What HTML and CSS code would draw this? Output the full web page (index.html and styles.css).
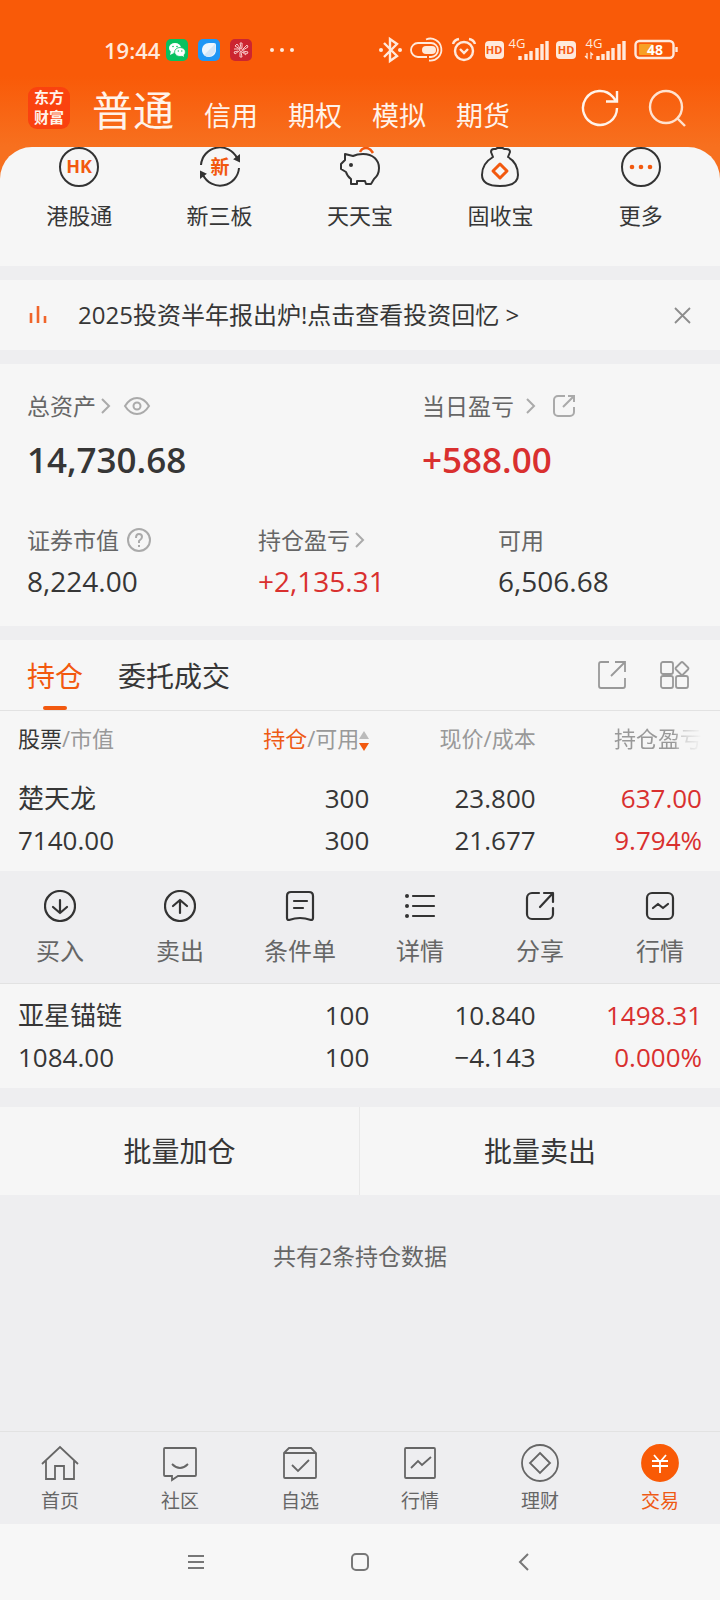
FILE: index.html
```
<!DOCTYPE html>
<html lang="zh-CN">
<head>
    <meta charset="UTF-8">
    <meta name="viewport" content="width=device-width, initial-scale=1.0">
    <title>东方财富 - 交易</title>
    <link rel="stylesheet" href="styles.css">
</head>
<body>
    <div class="top">
        <div class="status-bar">
            <span class="time">19:44</span>
            <div class="status-apps">
                <svg width="22" height="22" viewBox="0 0 22 22">
                    <rect width="22" height="22" rx="5" fill="#07c160"/>
                    <ellipse cx="9" cy="9" rx="6" ry="5" fill="#fff"/>
                    <path d="M5 12l-1 4 4-2z" fill="#fff"/>
                    <ellipse cx="14" cy="13" rx="5.4" ry="4.5" fill="#fff" stroke="#07c160" stroke-width="0.8"/>
                    <path d="M15 16l3 2-1-4z" fill="#fff"/>
                    <g fill="#07c160"><circle cx="7" cy="7.5" r="0.8"/><circle cx="11" cy="7.5" r="0.8"/><circle cx="12.3" cy="12" r="0.7"/><circle cx="15.8" cy="12" r="0.7"/></g>
                </svg>
                <svg width="22" height="22" viewBox="0 0 22 22">
                    <rect width="22" height="22" rx="5" fill="#1e96f5"/>
                    <path d="M4 11c0-4 3-7 7-7h5q2 0 2 2v5c0 4-3 7-7 7s-7-3-7-7z" fill="#eef6fd"/>
                    <path d="M17 5L6 16c3 3 7 2 9-1 3-2 3-6 2-10z" fill="#d3e6f7"/>
                </svg>
                <svg width="22" height="22" viewBox="0 0 22 22">
                    <rect width="22" height="22" rx="5" fill="#cc2530"/>
                    <g fill="none" stroke="#f8c9c9" stroke-width="1">
                        <circle cx="11" cy="11" r="1.5"/>
                        <path d="M11 9l-1-5 2 0 0 5M13 10l4-4 1 2-5 3M13 12l5 1-1 2-4-2M11 13l1 5-2 0 0-5M9 12l-4 3-1-2 4-1M10 10L5 7l2-2 3 4M12 13l4 3M9 10l-5 0"/>
                    </g>
                </svg>
            </div>
            <svg class="more-dots" width="26" height="22" viewBox="0 0 26 22" fill="#ffe9dc"><circle cx="3" cy="11" r="2"/><circle cx="13" cy="11" r="2"/><circle cx="23" cy="11" r="2"/></svg>
            <svg class="status-icons" width="300" height="36" viewBox="378 32 300 36" fill="none" stroke="#ffe9dc" stroke-width="2.400">
                <!-- bluetooth -->
                <path d="M384 43l13 13-7 5V39l7 5-13 13"/>
                <g fill="#ffe9dc" stroke="none"><circle cx="381" cy="50" r="2"/><circle cx="400" cy="50" r="2"/></g>
                <!-- toggle -->
                <path d="M427 57h-9a7 7 0 0 1 0-14h13a7 7 0 0 1 0 14h-2M426 39.500a11 11 0 1 1 3 21" stroke-width="1.800"/>
                <rect x="422" y="46" width="14" height="8" rx="4" fill="#ffe9dc" stroke="none"/>
                <!-- alarm -->
                <circle cx="464" cy="51" r="9"/>
                <path d="M460 49l4 4 4-4M453 44q1-4 6-5M475 44q-1-4-6-5"/>
                <!-- sim 1 -->
                <rect x="485" y="41" width="19" height="18" rx="4" fill="#ffe9dc" stroke="none"/>
                <path d="M520 60v-4M526 60v-6M531 60v-9M537 60v-12M542 60v-16M547 60V41" stroke-width="3.400"/>
                <!-- sim 2 -->
                <rect x="556" y="41" width="20" height="18" rx="4" fill="#ffe9dc" stroke="none"/>
                <path d="M598 60v-4M603 60v-6M608 60v-9M613 60v-12M619 60v-16M624 60V41" stroke-width="3.400"/>
                <path d="M587 53v5l-2-2M591 59v-6l2 2" stroke-width="1.300"/>
                <!-- battery -->
                <rect x="635.500" y="41" width="38" height="17" rx="4"/>
                <rect x="639" y="44" width="14" height="11" rx="1" fill="#f7a023" stroke="none"/>
                <path d="M676.500 47v5"/>
                <g class="status-text" stroke="none">
                    <text x="494" y="54" fill="#f5590f" font-size="11">HD</text>
                    <text x="566" y="54" fill="#f5590f" font-size="11">HD</text>
                    <text x="517" y="48" class="net" fill="#ffe9dc" font-size="13">4G</text>
                    <text x="594" y="48" class="net" fill="#ffe9dc" font-size="13">4G</text>
                    <text x="655" y="55" fill="#fff" font-size="14">48</text>
                </g>
            </svg>
        </div>

        <header class="app-header">
            <div class="logo">东方<br>财富</div>
            <nav class="accounts">
                <a href="#" class="current">普通</a>
                <a href="#">信用</a>
                <a href="#">期权</a>
                <a href="#">模拟</a>
                <a href="#">期货</a>
            </nav>
            <button class="icon-btn" aria-label="刷新">
                <svg width="40" height="40" viewBox="0 0 40 40" fill="none" stroke="#fff3ea" stroke-width="2.400"><path d="M37 20a17 17 0 1 1-4-11l3 4M26 13.500h11V3"/></svg>
            </button>
            <button class="icon-btn" aria-label="搜索">
                <svg width="40" height="40" viewBox="0 0 40 40" fill="none" stroke="#ffe2cf" stroke-width="2.400"><circle cx="18" cy="19" r="16"/><path d="M29 30l8 8"/></svg>
            </button>
        </header>

        <div class="quick">
            <button>
                <svg width="44" height="42" viewBox="0 0 44 42" fill="none" stroke="#333" stroke-width="2"><circle cx="22" cy="20" r="19"/><text x="22" y="26" class="hk">HK</text></svg>
                港股通
            </button>
            <button>
                <svg width="44" height="42" viewBox="0 0 44 42" fill="none" stroke="#333" stroke-width="2"><path d="M3 18A19 19 0 0 1 39 11M41 21A19 19 0 0 1 5 28"/><path d="M41 9v5l-4-2zM3 30v-5l4 2z" fill="#333"/><text x="22" y="27" class="xin">新</text></svg>
                新三板
            </button>
            <button>
                <svg width="44" height="42" viewBox="0 0 44 42" fill="none" stroke="#333" stroke-width="2" stroke-linejoin="round"><path d="M7 7l8 2q4-2 10-2c10 0 16 6 16 14q0 7-5 11l-3 5h-5l-1-3h-8v3h-6v-5q-4-3-5-7l-5-3v-5l4-4z"/><circle cx="13" cy="18" r="2" fill="#333" stroke="none"/><path d="M22 5q2-4 6-4t7 5" stroke="#f2590f" stroke-width="2.600"/></svg>
                天天宝
            </button>
            <button>
                <svg width="44" height="42" viewBox="0 0 44 42" fill="none" stroke="#333" stroke-width="2" stroke-linejoin="round"><path d="M15 10l-2-5q0-3 3-3 3 0 3-1h6q0 1 3 1 4 0 4 3l-2 5c7 4 10 11 10 18 0 8-6 11-18 11S4 36 4 28c0-7 4-14 11-18z"/><path d="M22 17l7 7-7 7-7-7z" stroke="#f2590f" stroke-width="3"/></svg>
                固收宝
            </button>
            <button>
                <svg width="44" height="42" viewBox="0 0 44 42" fill="none" stroke="#333" stroke-width="2"><circle cx="22" cy="20" r="19"/><g fill="#f2590f" stroke="none"><circle cx="13" cy="20" r="2.300"/><circle cx="22" cy="20" r="2.300"/><circle cx="31" cy="20" r="2.300"/></g></svg>
                更多
            </button>
        </div>
    </div>

    <section class="notice">
        <svg width="20" height="20" viewBox="0 0 20 20" fill="none" stroke="#f0652a" stroke-width="2.600"><path d="M3 18V8M10 18V1M17 18v-7"/></svg>
        <a href="#">2025投资半年报出炉!点击查看投资回忆 &gt;</a>
        <button class="icon-btn" aria-label="关闭">
            <svg width="20" height="20" viewBox="0 0 20 20" fill="none" stroke="#8c8c8c" stroke-width="1.800"><path d="M3 3l15 15M18 3L3 18"/></svg>
        </button>
    </section>

    <section class="assets">
        <div class="asset-row main">
            <div>
                <div class="label">总资产<svg class="chev" width="12" height="18" viewBox="0 0 12 18"><path d="M2 2l7 7-7 7"/></svg><svg class="eye" width="28" height="20" viewBox="0 0 28 20"><path d="M2 10q5-8 12-8t12 8q-5 8-12 8T2 10z"/><circle cx="14" cy="10" r="3.500"/></svg></div>
                <div class="value">14,730.68</div>
            </div>
            <div>
                <div class="label">当日盈亏<svg class="chev wide" width="12" height="18" viewBox="0 0 12 18"><path d="M2 2l7 7-7 7"/></svg><svg width="24" height="24" viewBox="0 0 24 24"><path d="M13 2H6a4 4 0 0 0-4 4v12a4 4 0 0 0 4 4h12a4 4 0 0 0 4-4v-5M16 2h6v6M22 2L11 13"/></svg></div>
                <div class="value red">+588.00</div>
            </div>
        </div>
        <div class="asset-row sub">
            <div>
                <div class="label">证券市值<svg class="help" width="24" height="24" viewBox="0 0 24 24"><circle cx="12" cy="12" r="11"/><path d="M9 10q0-4 3-4t3 3q0 2-3 4v2M12 17v2"/></svg></div>
                <div class="value">8,224.00</div>
            </div>
            <div>
                <div class="label">持仓盈亏<svg class="chev" width="12" height="18" viewBox="0 0 12 18"><path d="M2 2l7 7-7 7"/></svg></div>
                <div class="value red">+2,135.31</div>
            </div>
            <div>
                <div class="label">可用</div>
                <div class="value">6,506.68</div>
            </div>
        </div>
    </section>

    <section class="positions">
        <div class="tabs">
            <button class="active">持仓</button>
            <button>委托成交</button>
            <div class="tools">
                <button aria-label="分享"><svg width="30" height="30" viewBox="0 0 30 30" fill="none" stroke="#999" stroke-width="1.800"><path d="M12 2H4q-2 0-2 2v22q0 2 2 2h22q2 0 2-2v-8M18 2h10v10M28 2L14 16"/></svg></button>
                <button aria-label="布局"><svg width="30" height="30" viewBox="0 0 30 30" fill="none" stroke="#999" stroke-width="1.800"><rect x="1" y="2" width="12" height="12" rx="2"/><rect x="1" y="16" width="12" height="12" rx="2"/><rect x="16" y="16" width="12" height="12" rx="2"/><path d="M21 2.500q1-1 2 0l5 5q1 1 0 2l-5 5q-1 1-2 0l-5-5q-1-1 0-2z"/></svg></button>
            </div>
        </div>

        <table>
            <thead>
                <tr>
                    <th><b>股票</b>/市值</th>
                    <th><b class="orange">持仓</b>/可用<svg width="10" height="22" viewBox="0 0 10 22"><path d="M5 1l5 8H0z" fill="#bbb"/><path d="M5 21l5-8H0z" fill="#f2590f"/></svg></th>
                    <th>现价/成本</th>
                    <th><span class="fade">持仓盈亏</span></th>
                </tr>
            </thead>
            <tbody>
                <tr>
                    <td>楚天龙<br>7140.00</td>
                    <td>300<br>300</td>
                    <td>23.800<br>21.677</td>
                    <td class="red">637.00<br>9.794%</td>
                </tr>
                <tr>
                    <td colspan="4" class="actions-cell">
                        <div class="actions">
                            <button><svg width="32" height="32" viewBox="0 0 32 32"><circle cx="16" cy="16" r="15"/><path d="M16 10v13M9 17l7 6 7-6"/></svg>买入</button>
                            <button><svg width="32" height="32" viewBox="0 0 32 32"><circle cx="16" cy="16" r="15"/><path d="M16 23V10M9 16l7-6 7 6"/></svg>卖出</button>
                            <button><svg width="32" height="32" viewBox="0 0 32 32"><path d="M7 2h18q4 0 4 4v22q0 2-2 2-6-2-11-2t-11 2q-2 0-2-2V6q0-4 4-4zM10 11h13M10 18h9"/></svg>条件单</button>
                            <button><svg width="32" height="32" viewBox="0 0 32 32"><path d="M9 6h21M9 16h21M9 26h21"/><g class="solid"><circle cx="3" cy="6" r="2"/><circle cx="3" cy="16" r="2"/><circle cx="3" cy="26" r="2"/></g></svg>详情</button>
                            <button><svg width="32" height="32" viewBox="0 0 32 32"><path d="M15 3H8a5 5 0 0 0-5 5v16a5 5 0 0 0 5 5h16a5 5 0 0 0 5-5v-6M20 3h9v9M29 3L16 17"/></svg>分享</button>
                            <button><svg width="32" height="32" viewBox="0 0 32 32"><rect x="3" y="3" width="26" height="26" rx="5"/><path d="M9 18l5-4 5 4 5-4"/></svg>行情</button>
                        </div>
                    </td>
                </tr>
                <tr>
                    <td>亚星锚链<br>1084.00</td>
                    <td>100<br>100</td>
                    <td>10.840<br>−4.143</td>
                    <td class="red">1498.31<br>0.000%</td>
                </tr>
            </tbody>
        </table>
    </section>

    <div class="batch">
        <button>批量加仓</button>
        <button>批量卖出</button>
    </div>

    <p class="count">共有2条持仓数据</p>

    <nav class="tab-bar">
        <a href="#"><svg width="40" height="40" viewBox="0 0 40 40"><path d="M2 21L20 4l18 17M6 18v18h9V23h9v13h10V18"/></svg>首页</a>
        <a href="#"><svg width="40" height="40" viewBox="0 0 40 40"><path d="M5 5h30q1 0 1 1v26q0 1-1 1H18l-6 4v-4H5q-1 0-1-1V6q0-1 1-1zM12 21q8 8 16 0"/></svg>社区</a>
        <a href="#"><svg width="40" height="40" viewBox="0 0 40 40"><path d="M4 10l5-5h22l5 5v24q0 1-1 1H5q-1 0-1-1zM4 10h32M12 22l6 6 11-11"/></svg>自选</a>
        <a href="#"><svg width="40" height="40" viewBox="0 0 40 40"><rect x="5" y="5" width="30" height="30" rx="1"/><path d="M11 25l7-7 4 4 9-8"/></svg>行情</a>
        <a href="#"><svg width="40" height="40" viewBox="0 0 40 40"><circle cx="20" cy="20" r="18"/><path d="M20 10l10 10-10 10-10-10z"/></svg>理财</a>
        <a href="#" class="current"><svg width="40" height="40" viewBox="0 0 40 40"><circle cx="20" cy="20" r="18"/><path d="M14 12l6 7 6-7M12 18h16M12 23h16M20 18v12"/></svg>交易</a>
    </nav>

    <div class="system-nav">
        <button aria-label="菜单"><svg width="28" height="28" viewBox="0 0 28 28"><path d="M6 8h16M6 14h16M6 20h16"/></svg></button>
        <button aria-label="主页"><svg width="28" height="28" viewBox="0 0 28 28"><rect x="6" y="6" width="16" height="16" rx="4"/></svg></button>
        <button aria-label="返回"><svg width="28" height="28" viewBox="0 0 28 28"><path d="M18 6l-8 8 8 8"/></svg></button>
    </div>
</body>
</html>
```
FILE: styles.css
```
* {
    box-sizing: border-box;
}
body {
    margin: 0;
    min-height: 100vh;
    display: flex;
    flex-direction: column;
    font-family: "Open Sans", "Noto Sans CJK SC", sans-serif;
    color: #363636;
    background: #eeeef0;
}
button {
    padding: 0;
    border: none;
    background: none;
    font: inherit;
    color: inherit;
    cursor: pointer;
}
a {
    color: inherit;
    text-decoration: none;
}
svg {
    display: block;
    flex: none;
}
.red {
    color: #d9302f;
}
.orange {
    color: #ee5a14;
}

/* status bar and header */
.top {
    background: linear-gradient(#f95a08 0, #f95a08 76px, #f7701f 147px);
}
.status-bar {
    display: flex;
    align-items: center;
    height: 63px;
    padding: 36px 42px 0 104px;
}
.time {
    font-size: 22px;
    line-height: 26px;
    font-weight: 600;
    color: #ffe9dc;
}
.status-apps {
    display: flex;
    gap: 10px;
    margin-left: 6px;
}
.more-dots {
    margin-left: 17px;
}
.status-icons {
    margin-left: auto;
}
.status-text {
    font-weight: 700;
    text-anchor: middle;
}
.status-text .net {
    font-weight: 400;
}
.app-header {
    display: flex;
    align-items: center;
    height: 84px;
    padding: 6px 32px 0 28px;
}
.logo {
    width: 42px;
    height: 42px;
    border-radius: 9px;
    background: #fa420f;
    color: #fff3ea;
    font-size: 15px;
    line-height: 20px;
    font-weight: 700;
    text-align: center;
}
.accounts {
    flex: 1;
    display: flex;
    align-items: baseline;
    gap: 30px;
    margin-left: 22px;
    padding-top: 10px;
    font-size: 27px;
    line-height: 48px;
    color: #fff3ea;
}
.accounts .current {
    font-size: 41px;
}
.icon-btn + .icon-btn {
    margin-left: 28px;
}

.quick {
    display: grid;
    grid-template-columns: repeat(5, 1fr);
    height: 119px;
    padding: 0 9px;
    border-radius: 32px 32px 0 0;
    background: #f6f6f6;
    overflow: hidden;
}
.quick button {
    display: flex;
    flex-direction: column;
    align-items: center;
    gap: 11px;
    font-size: 22px;
    line-height: 30px;
}
.quick text {
    fill: #f2590f;
    stroke: none;
    font-weight: 700;
    text-anchor: middle;
}
.quick .hk {
    font-size: 18px;
}
.quick .xin {
    font-size: 19px;
}

.notice {
    display: flex;
    align-items: center;
    margin: 14px 0;
    height: 70px;
    padding: 0 28px;
    background: #f6f6f6;
    font-size: 24px;
    line-height: 32px;
}
.notice a {
    flex: 1;
    margin-left: 30px;
}

/* account totals */
.assets {
    padding: 26px 27px 20px;
    background: #f6f6f6;
}
.asset-row {
    display: grid;
}
.asset-row.main {
    grid-template-columns: 395fr 271fr;
    margin-bottom: 39px;
}
.asset-row.sub {
    grid-template-columns: 231fr 240fr 195fr;
}
.label {
    display: flex;
    align-items: center;
    font-size: 23px;
    line-height: 32px;
    color: #666;
}
.label svg {
    fill: none;
    stroke: #aaa;
    stroke-width: 2;
}
.label .chev {
    margin-left: 4px;
}
.label .wide {
    margin: 0 15px 0 11px;
}
.label .eye {
    margin-left: 11px;
}
.label .help {
    margin-left: 8px;
}
.value {
    font-size: 28px;
    line-height: 50px;
}
.main .value {
    margin-top: 13px;
    font-size: 35px;
    font-weight: 600;
}

/* positions */
.positions {
    margin-top: 14px;
    background: #f6f6f6;
}
.tabs {
    display: flex;
    align-items: stretch;
    gap: 35px;
    height: 71px;
    padding: 0 30px 0 27px;
    border-bottom: 1px solid #e2e2e2;
    font-size: 28px;
}
.tabs .active {
    position: relative;
    color: #f2590f;
}
.tabs .active::after {
    content: "";
    position: absolute;
    left: 50%;
    bottom: 0;
    width: 24px;
    height: 4px;
    margin-left: -12px;
    border-radius: 2px;
    background: #f2590f;
}
.tools {
    display: flex;
    align-items: center;
    gap: 33px;
    margin-left: auto;
}
table {
    width: 100%;
    table-layout: fixed;
    border-collapse: collapse;
    text-align: right;
}
th {
    height: 56px;
    padding: 0 0 2px;
    font-size: 22px;
    font-weight: 400;
    line-height: 30px;
    color: #999;
    text-align: right;
    white-space: nowrap;
}
th:nth-child(1) {
    width: 25%;
}
th:nth-child(2) {
    width: 26.300%;
}
th:nth-child(3) {
    width: 23.100%;
}
th b {
    font-weight: 400;
    color: #363636;
}
th .orange {
    color: #ee5a14;
}
th svg {
    display: inline-block;
    vertical-align: middle;
}
.fade {
    -webkit-mask-image: linear-gradient(to right, #000 68%, rgba(0, 0, 0, 0.4) 78%, transparent);
    mask-image: linear-gradient(to right, #000 68%, rgba(0, 0, 0, 0.4) 78%, transparent);
}
td {
    padding: 10px 0;
    font-size: 26px;
    line-height: 42px;
}
th:first-child,
td:first-child {
    padding-left: 18px;
    text-align: left;
}
th:last-child,
td:last-child {
    padding-right: 18px;
}
td.actions-cell {
    padding: 0;
}
.actions {
    display: grid;
    grid-template-columns: repeat(6, 1fr);
    padding: 19px 0 17px;
    border-bottom: 1px solid #e2e2e2;
    background: #eeeef0;
    color: #666;
    font-size: 24px;
    line-height: 30px;
}
.actions button {
    display: flex;
    flex-direction: column;
    align-items: center;
    gap: 14px;
}
.actions svg {
    fill: none;
    stroke: #333;
    stroke-width: 2.200;
    stroke-linecap: round;
    stroke-linejoin: round;
}
.actions .solid {
    fill: #333;
    stroke: none;
}

.batch {
    display: grid;
    grid-template-columns: 1fr 1fr;
    margin-top: 19px;
    background: #f6f6f6;
    font-size: 28px;
    line-height: 88px;
}
.batch button:first-child {
    border-right: 1px solid #e8e8e8;
}
.count {
    flex: 1;
    margin: 45px 0;
    font-size: 23px;
    line-height: 32px;
    color: #666;
    text-align: center;
}

/* bottom navigation */
.tab-bar {
    display: grid;
    grid-template-columns: repeat(6, 1fr);
    padding: 11px 0;
    border-top: 1px solid #e2e2e2;
    font-size: 19px;
    line-height: 24px;
    color: #666;
}
.tab-bar a {
    display: flex;
    flex-direction: column;
    align-items: center;
    gap: 6px;
}
.tab-bar svg {
    fill: none;
    stroke: #666;
    stroke-width: 1.800;
}
.tab-bar .current {
    color: #ee5a14;
}
.tab-bar .current svg {
    stroke: #fff;
}
.tab-bar .current circle {
    fill: #f95a06;
    stroke: #f95a06;
}
.system-nav {
    display: flex;
    justify-content: center;
    align-items: center;
    gap: 136px;
    height: 76px;
    background: #f7f7f7;
}
.system-nav svg {
    fill: none;
    stroke: #777;
    stroke-width: 2;
}
```
